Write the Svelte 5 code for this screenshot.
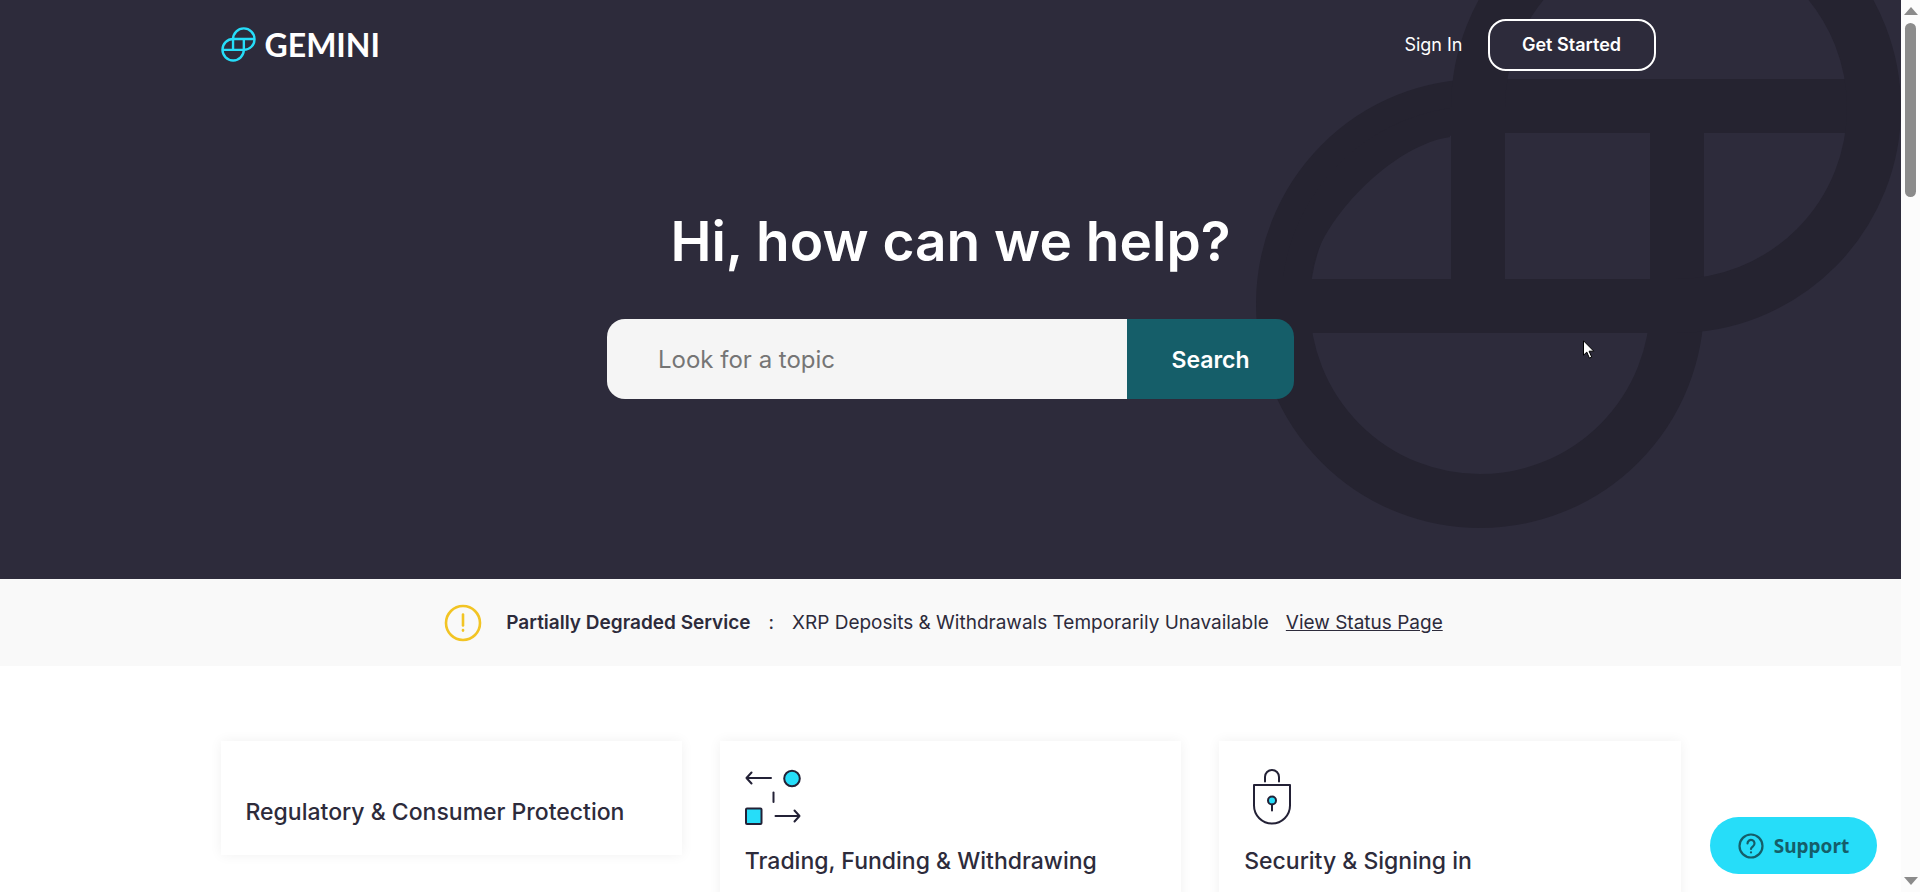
<script>
	let query = '';

	const cards = [
		{ title: 'Regulatory & Consumer Protection', icon: null },
		{ title: 'Trading, Funding & Withdrawing', icon: 'trading' },
		{ title: 'Security & Signing in', icon: 'lock' }
	];
</script>

{#snippet mark()}
	<path d="M618 222H224A197 198 0 0 0 27 420A197 197 0 0 0 421 420V222" />
	<path d="M27 422H420A198 198 0 0 0 618 224A198 198 0 0 0 222 224V422" />
{/snippet}

<div class="window">
	<div class="page">
		<section class="hero">
			<svg class="watermark" viewBox="0 0 645 645" aria-hidden="true">
				{@render mark()}
				<path class="wedge" d="M55 394C57 345 132 262 194 253V224A197 197 0 0 0 27 394z" />
			</svg>

			<header class="container">
				<a class="logo" href="/">
					<svg viewBox="0 0 645 645" aria-hidden="true">{@render mark()}</svg>
					<span>GEMINI</span>
				</a>
				<nav>
					<a class="sign-in" href="/signin">Sign In</a>
					<a class="get-started" href="/register">Get Started</a>
				</nav>
			</header>

			<h1>Hi, how can we help?</h1>
			<form class="search" on:submit|preventDefault>
				<input type="search" placeholder="Look for a topic" aria-label="Look for a topic" bind:value={query} />
				<button type="submit">Search</button>
			</form>
		</section>

		<section class="status">
			<svg viewBox="0 0 38 38" aria-hidden="true">
				<circle cx="19" cy="19" r="17" />
				<path d="M19 10.5v11" />
				<path d="M19 26v.6" />
			</svg>
			<strong>Partially Degraded Service</strong>
			<span class="colon">:</span>
			<span>XRP Deposits &amp; Withdrawals Temporarily Unavailable</span>
			<a href="/status">View Status Page</a>
		</section>

		<main class="container cards">
			{#each cards as card}
				<a class="card" href="/topics">
					{#if card.icon === 'trading'}
						<svg class="icon" viewBox="0 0 56 56" aria-hidden="true">
							<path d="M26 9H1.5M6.5 3.5L1.5 9l5 5.5" />
							<circle class="fill" cx="47" cy="9.500" r="7.800" />
							<path d="M28.500 23.500v9.500" />
							<rect class="fill" x="1" y="39.500" width="15.500" height="15.500" rx="1" />
							<path d="M30.500 47h24M49.500 41.500l5 5.500-5 5.500" />
						</svg>
					{:else if card.icon === 'lock'}
						<svg class="icon" viewBox="0 0 56 56" aria-hidden="true">
							<path d="M21 12.500V8a7 7 0 0 1 14 0v4.500" />
							<path stroke-linecap="butt" d="M10 16h36v20.500a18 18 0 0 1-36 0z" />
							<circle class="fill" cx="28" cy="31.500" r="4" />
							<path d="M28 35.500v6" />
						</svg>
					{/if}
					<h2>{card.title}</h2>
				</a>
			{/each}
		</main>

		<button class="support">
			<svg viewBox="0 0 26 26" aria-hidden="true">
				<circle cx="13" cy="13" r="11.5" />
				<path d="M9.500 10.500a3.500 3.500 0 1 1 5.500 2.800c-1.200.8-2 1.400-2 2.700" />
				<path d="M13 19.300v.2" />
			</svg>
			Support
		</button>

		<svg class="cursor" viewBox="0 0 12 19" aria-hidden="true">
			<path d="M.5.800v14.400l3.300-3.100 2.600 6 2.300-1-2.600-5.900h4.700z" />
		</svg>
	</div>

	<div class="scrollbar" aria-hidden="true">
		<svg viewBox="0 0 14 8"><path d="M0 8l7-8 7 8z" /></svg>
		<div class="track"><div class="thumb"></div></div>
		<svg viewBox="0 0 14 8"><path d="M0 0h14l-7 8z" /></svg>
	</div>
</div>

<style>
	:global(body) {
		margin: 0;
		font-family: Inter, 'Liberation Sans', sans-serif;
		color: #2d2b3b;
		background: #fff;
	}
	.window {
		display: flex;
		height: 100vh;
		overflow: hidden;
	}
	.page {
		position: relative;
		flex: 1;
		min-width: 0;
		overflow: hidden;
	}
	.container {
		box-sizing: border-box;
		width: 100%;
		max-width: 1460px;
		margin: 0 auto;
	}
	a {
		color: inherit;
		text-decoration: none;
	}

	.hero {
		position: relative;
		padding-bottom: 180px;
		overflow: hidden;
		background: #2d2b3b;
		color: #fff;
	}
	.watermark {
		position: absolute;
		top: -116px;
		right: 0;
		width: 645px;
		fill: none;
		stroke: #252330;
		stroke-width: 54;
	}
	.wedge {
		fill: #252330;
		stroke: none;
	}
	header {
		position: relative;
		display: flex;
		justify-content: space-between;
		align-items: center;
		height: 89px;
		padding-right: 25px;
	}
	.logo {
		display: flex;
		align-items: center;
		gap: 9px;
		font: 700 32px/35px Lato, sans-serif;
	}
	.logo svg {
		width: 35px;
		height: 35px;
		fill: none;
		stroke: #26ddf9;
		stroke-width: 44;
	}
	nav {
		display: flex;
		align-items: center;
		gap: 25px;
	}
	.sign-in {
		font-size: 18px;
	}
	.get-started {
		box-sizing: border-box;
		width: 168px;
		border: 2px solid #fff;
		border-radius: 18px;
		background: #2d2b3b;
		font-size: 18px;
		font-weight: 600;
		line-height: 48px;
		text-align: center;
	}
	h1 {
		position: relative;
		margin: 117px 0 43px;
		font-size: 55px;
		font-weight: 600;
		line-height: 70px;
		text-align: center;
	}
	.search {
		position: relative;
		display: flex;
		width: 687px;
		height: 80px;
		margin: 0 auto;
		border-radius: 18px;
		overflow: hidden;
	}
	.search input {
		flex: 1;
		min-width: 0;
		padding: 0 51px;
		border: 0;
		background: #f5f5f5;
		color: #2d2b3b;
		font: 400 24px Inter, sans-serif;
	}
	.search input::placeholder {
		color: #757575;
	}
	.search button {
		width: 167px;
		padding: 2px 0 0;
		border: 0;
		background: #155e69;
		color: #fff;
		font: 600 23px Inter, sans-serif;
	}

	.status {
		display: flex;
		justify-content: center;
		align-items: center;
		height: 87px;
		padding-right: 14px;
		background: #f9f9f9;
		font-size: 19px;
		line-height: 24px;
	}
	.status svg {
		width: 38px;
		height: 38px;
		margin-right: 24px;
		fill: none;
		stroke: #f2c424;
		stroke-width: 2.6;
		stroke-linecap: round;
	}
	.status strong {
		font-weight: 600;
	}
	.colon {
		margin: 0 18px;
	}
	.status a {
		margin-left: 17px;
		text-decoration: underline;
	}

	.cards {
		display: grid;
		grid-template-columns: repeat(3, 1fr);
		align-items: start;
		gap: 38px;
		padding-top: 75px;
	}
	.card {
		padding: 28px 25px;
		box-shadow: 0 0 12px rgba(0, 0, 0, 0.06);
	}
	.icon {
		display: block;
		width: 56px;
		height: 56px;
		fill: none;
		stroke: #232136;
		stroke-width: 2;
		stroke-linecap: round;
		stroke-linejoin: round;
	}
	.icon .fill {
		fill: #26ddf9;
	}
	h2 {
		margin: 28px 0 0;
		font-size: 23px;
		font-weight: 500;
		line-height: 30px;
	}
	.icon + h2 {
		margin-top: 21px;
	}

	.support {
		position: absolute;
		right: 24px;
		bottom: 18px;
		display: flex;
		justify-content: center;
		align-items: center;
		gap: 10px;
		width: 167px;
		height: 57px;
		padding: 0;
		border: 0;
		border-radius: 29px;
		background: #26ddf9;
		color: #155e69;
		font: 700 19px 'Noto Sans', sans-serif;
	}
	.support svg {
		width: 26px;
		height: 26px;
		fill: none;
		stroke: #155e69;
		stroke-width: 2.2;
		stroke-linecap: round;
	}
	.cursor {
		position: absolute;
		top: 340px;
		left: 1583px;
		width: 12px;
		height: 19px;
		fill: #fff;
		stroke: #000;
	}

	.scrollbar {
		display: flex;
		flex-direction: column;
		align-items: center;
		box-sizing: border-box;
		width: 19px;
		padding: 7px 0;
		background: #fcfcfc;
	}
	.scrollbar svg {
		width: 14px;
		height: 8px;
		fill: #8b8b8b;
	}
	.track {
		flex: 1;
		padding-top: 8px;
	}
	.thumb {
		width: 11px;
		height: 174px;
		border-radius: 6px;
		background: #8b8b8b;
	}
</style>
